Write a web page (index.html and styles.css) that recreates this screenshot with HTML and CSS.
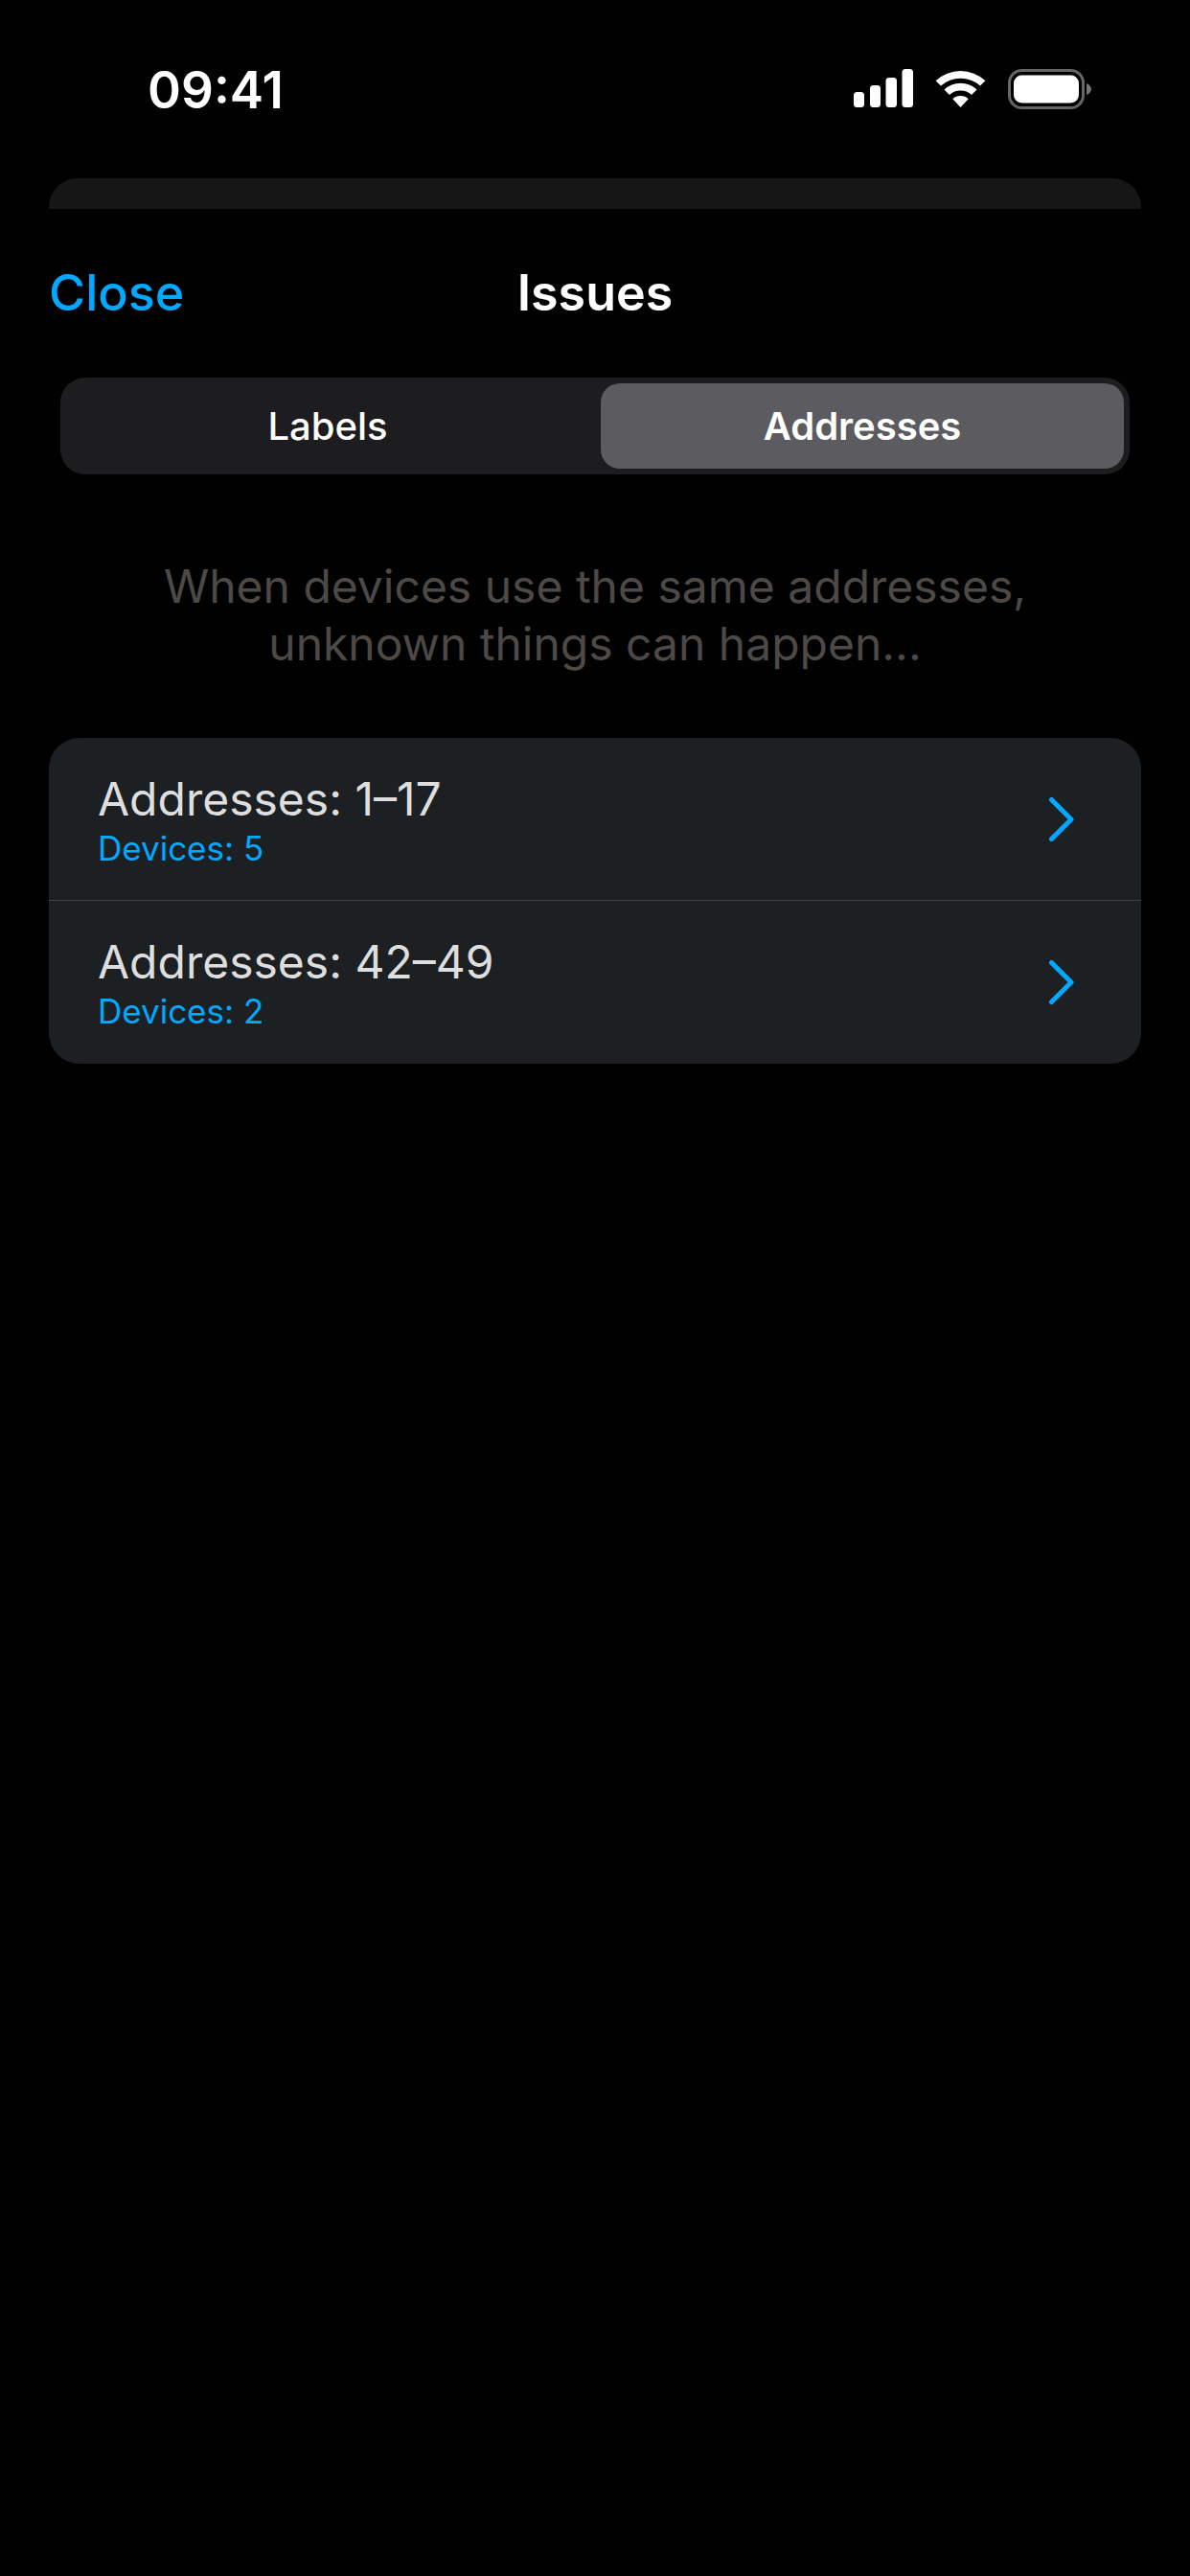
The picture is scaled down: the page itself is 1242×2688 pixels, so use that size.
FILE: index.html
```html
<!DOCTYPE html>
<html lang="en">
<head>
    <meta charset="UTF-8">
    <meta name="viewport" content="width=device-width, initial-scale=1.0">
    <title>Issues</title>
    <link rel="stylesheet" href="styles.css">
</head>
<body>
    <div class="status-bar">
        <span class="time">09:41</span>
        <div class="island"></div>
        <div class="status-icons">
            <svg width="62" height="40" viewBox="0 0 62 40" fill="#fff" aria-hidden="true">
                <rect x="0" y="24" width="11" height="16" rx="3.5"/>
                <rect x="17" y="17" width="11" height="23" rx="3.5"/>
                <rect x="33.5" y="9" width="11.5" height="31" rx="3.5"/>
                <rect x="50.5" y="0" width="11.5" height="40" rx="3.5"/>
            </svg>
            <svg width="53" height="40" viewBox="0 0 53 40" aria-hidden="true">
                <path d="M0.600 12.300A38 38 0 0 1 52.400 12.300L47 17.600A30.500 30.500 0 0 0 6 17.600Z" fill="#fff"/>
                <path d="M9.500 21.500A25 25 0 0 1 43.500 21.500L38 27A17 17 0 0 0 15 27Z" fill="#fff"/>
                <path d="M26.500 40L18.300 31.300A12 12 0 0 1 34.700 31.300Z" fill="#fff"/>
            </svg>
            <svg width="87" height="42" viewBox="0 0 87 42" aria-hidden="true">
                <rect x="1.500" y="1.500" width="77" height="39" rx="13" fill="none" stroke="#666" stroke-width="3"/>
                <rect x="6" y="6.500" width="68" height="29" rx="8.500" fill="#fff"/>
                <path d="M82 15C85 16.200 87 18.500 87 21S85 25.800 82 27Z" fill="#757575"/>
            </svg>
        </div>
    </div>
    <div class="back-card"></div>

    <main class="sheet">
        <header class="nav">
            <button type="button" class="close">Close</button>
            <h1>Issues</h1>
        </header>

        <div class="segments" role="radiogroup" aria-label="Issue type">
            <label class="segment">
                <input type="radio" name="issueType" value="labels">
                <span>Labels</span>
            </label>
            <label class="segment">
                <input type="radio" name="issueType" value="addresses" checked>
                <span>Addresses</span>
            </label>
        </div>

        <p class="hint">When devices use the same addresses, unknown things can happen...</p>

        <ul class="list">
            <li>
                <a href="#addresses-1-17" class="row">
                    <span class="row-text">
                        <span class="row-title">Addresses: 1–17</span>
                        <span class="row-sub">Devices: 5</span>
                    </span>
                    <svg width="28" height="48" viewBox="0 0 28 48" aria-hidden="true">
                        <path d="M3.500 3.500L24 24L3.500 44.500" fill="none" stroke="#00a9ff" stroke-width="5" stroke-linecap="round" stroke-linejoin="round"/>
                    </svg>
                </a>
            </li>
            <li>
                <a href="#addresses-42-49" class="row">
                    <span class="row-text">
                        <span class="row-title">Addresses: 42–49</span>
                        <span class="row-sub">Devices: 2</span>
                    </span>
                    <svg width="28" height="48" viewBox="0 0 28 48" aria-hidden="true">
                        <path d="M3.500 3.500L24 24L3.500 44.500" fill="none" stroke="#00a9ff" stroke-width="5" stroke-linecap="round" stroke-linejoin="round"/>
                    </svg>
                </a>
            </li>
        </ul>
    </main>
</body>
</html>
```

FILE: styles.css
```css
* {
    box-sizing: border-box;
}
body {
    display: flex;
    flex-direction: column;
    min-height: 100vh;
    margin: 0;
    background-color: #000;
    color: #fff;
    font-family: Inter, "Liberation Sans", sans-serif;
}
.status-bar {
    display: grid;
    grid-template-columns: 1fr 396px 1fr;
    height: 186px;
    background: linear-gradient(#010101 113px, #000 113px);
}
.time {
    padding: 62px 0 0 27px;
    font-size: 53px;
    line-height: 64px;
    font-weight: 600;
    text-align: center;
}
.island {
    height: 78px;
    margin-top: 35px;
    border-radius: 56px 56px 0 0;
    background-color: #000;
}
.status-icons {
    display: flex;
    justify-content: flex-end;
    align-items: flex-start;
    gap: 23px;
    padding: 72px 103px 0 0;
}
.status-icons svg {
    flex-shrink: 0;
}
.back-card {
    height: 32px;
    margin: 0 51px;
    border-radius: 30px 30px 0 0;
    background-color: #161616;
}
.sheet {
    flex: 1;
    padding: 56px 51px;
    border-radius: 30px 30px 0 0;
    background-color: #010101;
}
.nav {
    display: grid;
    grid-template-columns: 1fr auto 1fr;
    align-items: center;
    height: 64px;
}
.nav h1 {
    margin: 0;
    font-size: 52px;
    line-height: 64px;
    font-weight: 600;
}
.close {
    justify-self: start;
    padding: 0;
    border: none;
    background: none;
    color: #00a9ff;
    font-family: inherit;
    font-size: 52px;
    line-height: 64px;
    font-weight: 500;
    cursor: pointer;
}
.segments {
    display: flex;
    margin: 56px 12px 0;
    border-radius: 26px;
    background-color: #1d1d1f;
}
.segment {
    flex: 1;
    padding: 6px;
    cursor: pointer;
}
.segment input {
    position: absolute;
    opacity: 0;
}
.segment span {
    display: block;
    border-radius: 20px;
    font-size: 40px;
    line-height: 89px;
    font-weight: 500;
    text-align: center;
}
.segment input:checked + span {
    background-color: #5c5b60;
    font-weight: 600;
}
.hint {
    max-width: 960px;
    margin: 87px auto 0;
    color: #4c4946;
    font-size: 48px;
    line-height: 60px;
    text-align: center;
}
.list {
    margin: 68px 0 0;
    padding: 0;
    border-radius: 32px;
    background-color: #1c2022;
    list-style: none;
    overflow: hidden;
}
.list li:not(:last-child) .row {
    border-bottom: 1px solid #404345;
}
.row {
    display: flex;
    justify-content: space-between;
    align-items: center;
    height: 170px;
    padding: 0 69px 0 51px;
    color: #dededf;
    text-decoration: none;
}
.row-text {
    display: flex;
    flex-direction: column;
}
.row-title {
    font-size: 48px;
    line-height: 60px;
}
.row-sub {
    color: #00a9ff;
    font-size: 35px;
    line-height: 42px;
}
```
